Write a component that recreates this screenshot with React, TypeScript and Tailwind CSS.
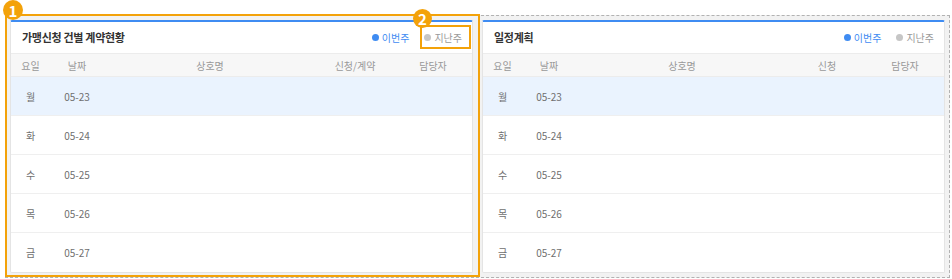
const DAYS = [
  { day: '월', date: '05-23', active: true },
  { day: '화', date: '05-24' },
  { day: '수', date: '05-25' },
  { day: '목', date: '05-26' },
  { day: '금', date: '05-27' },
]

function Legend() {
  return (
    <div className="flex items-center gap-[15px] text-[10px]">
      <span className="flex items-center gap-[3px] text-[#3f8cf2]">
        <span className="h-[7px] w-[7px] rounded-full bg-[#3f8cf2]" />
        이번주
      </span>
      <span className="flex items-center gap-[3px] text-[#9a9a9a]">
        <span className="h-[7px] w-[7px] rounded-full bg-[#c6c6c6]" />
        지난주
      </span>
    </div>
  )
}

function Card({ title, cols }: { title: string; cols: string[] }) {
  return (
    <div className="flex w-[463px] flex-col rounded-[2px] border border-t-2 border-[#e4e4e4] border-t-[#3f8cf2] bg-white">
      <div className="flex h-[31px] items-center justify-between pl-[11px] pr-[10px]">
        <h2 className="text-[11px] font-bold tracking-[-0.3px] text-[#333]">{title}</h2>
        <Legend />
      </div>
      <div className="grid h-[24px] grid-cols-[39px_54px_212px_78px_1fr] items-center border-y border-[#ececec] bg-[#f7f7f7] text-[10px] text-[#999]">
        {cols.map((c) => (
          <span key={c} className="text-center">
            {c}
          </span>
        ))}
      </div>
      {DAYS.map((d, i) => (
        <div
          key={d.day}
          className={[
            'grid h-[39px] grid-cols-[39px_54px_212px_78px_1fr] items-center text-[10px] text-[#6f6f6f]',
            i < DAYS.length - 1 ? 'border-b border-[#efefef]' : '',
            d.active ? 'bg-[#eaf3fe]' : '',
          ].join(' ')}
        >
          <span className="text-center">{d.day}</span>
          <span className="text-center">{d.date}</span>
          <span />
          <span />
          <span />
        </div>
      ))}
    </div>
  )
}

export default function App() {
  return (
    <div
      className="relative h-[279px] w-[952px] bg-white pt-[15px] pl-[5px]"
      style={{ fontFamily: '"Noto Sans CJK KR", "Noto Sans", sans-serif' }}
    >
      <div className="flex w-[945px] gap-[9px] border border-dashed border-[#b2b2b2] bg-[#f2f2f2] p-[4px]">
        <Card title="가맹신청 건별 계약현황" cols={['요일', '날짜', '상호명', '신청/계약', '담당자']} />
        <Card title="일정계획" cols={['요일', '날짜', '상호명', '신청', '담당자']} />
      </div>

      {/* annotation 1 */}
      <div className="pointer-events-none absolute left-[5px] top-[14px] h-[263px] w-[475px] border-2 border-[#f3a20a]" />
      <span className="absolute left-[3px] top-0 flex h-[20px] w-[20px] items-center justify-center rounded-full bg-[#f3a20a] text-[15px] font-bold leading-none text-white">
        1
      </span>

      {/* annotation 2 */}
      <div className="pointer-events-none absolute left-[420px] top-[25px] h-[24px] w-[51px] border-2 border-[#f3a20a]" />
      <span className="absolute left-[413px] top-[9px] flex h-[19px] w-[19px] items-center justify-center rounded-full bg-[#f3a20a] text-[15px] font-bold leading-none text-white">
        2
      </span>
    </div>
  )
}
